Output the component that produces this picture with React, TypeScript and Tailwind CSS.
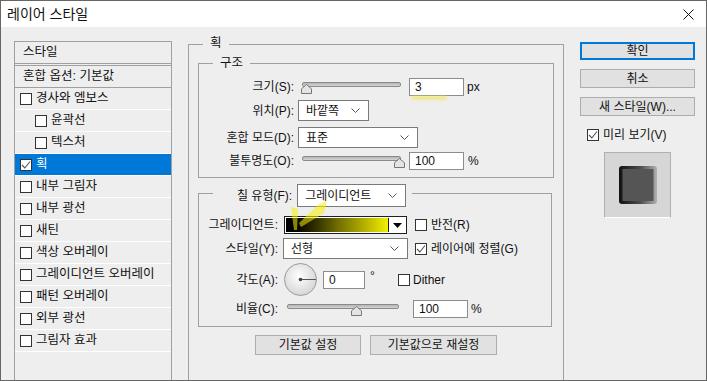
import React from 'react';

interface StyleItem {
    name: string;
    indent?: boolean;
    checked?: boolean;
    selected?: boolean;
}

const styleItems: StyleItem[] = [
    { name: '경사와 엠보스' },
    { name: '윤곽선', indent: true },
    { name: '텍스처', indent: true },
    { name: '획', checked: true, selected: true },
    { name: '내부 그림자' },
    { name: '내부 광선' },
    { name: '새틴' },
    { name: '색상 오버레이' },
    { name: '그레이디언트 오버레이' },
    { name: '패턴 오버레이' },
    { name: '외부 광선' },
    { name: '그림자 효과' },
];

const CheckBox = ({ checked = false }: { checked?: boolean }) => (
    <span className="w-[12px] h-[12px] shrink-0 border border-[#333333] bg-white flex items-center justify-center">
        {checked && (
            <svg width="10" height="10" viewBox="0 0 10 10">
                <polyline points="1,5 3.8,8 9,1.5" fill="none" stroke="#555555" strokeWidth="1.1" />
            </svg>
        )}
    </span>
);

const Chevron = () => (
    <svg width="9" height="5" viewBox="0 0 9 5" className="ml-auto mr-[8px] shrink-0">
        <polyline points="0.5,0.5 4.5,4.5 8.5,0.5" fill="none" stroke="#555555" strokeWidth="1" />
    </svg>
);

const Select = ({ text, className }: { text: string; className: string }) => (
    <div className={`border border-[#7a7a7a] bg-white flex items-center pl-[7px] ${className}`}>
        <span>{text}</span>
        <Chevron />
    </div>
);

const Slider = ({ width, value }: { width: number; value: number }) => {
    const x = Math.round(value * (width - 2));
    return (
        <div className="relative h-[18px] shrink-0" style={{ width }}>
            <div className="absolute left-0 right-0 top-[4px] h-[5px] rounded-[2px] border border-[#8a8a8a] bg-gradient-to-b from-[#b4b4b4] to-[#d6d6d6]" />
            <svg className="absolute top-[6px]" style={{ left: x - 4 }} width="11" height="10" viewBox="0 0 11 10">
                <polygon points="5.5,0.5 10.5,4.8 10.5,9.5 0.5,9.5 0.5,4.8" fill="#e4e4e4" stroke="#777777" />
            </svg>
        </div>
    );
};

const TextBox = ({ value, className }: { value: string; className: string }) => (
    <div className={`h-[18px] border border-[#8c8c8c] bg-white flex items-center pl-[5px] shrink-0 ${className}`}>
        {value}
    </div>
);

const Button = ({ label, className }: { label: string; className: string }) => (
    <button className={`bg-[#e1e1e1] flex items-center justify-center text-[12px] leading-none ${className}`}>
        {label}
    </button>
);

const App: React.FC = () => {
    return (
        <div className="w-[707px] h-[381px] bg-[#eeeeee] border border-[#666666] flex flex-col overflow-hidden text-[12px] text-[#111111] font-['Liberation_Sans','Noto_Sans_CJK_KR',sans-serif]">
            {/* title bar */}
            <div className="h-[26px] bg-white flex items-center pl-[6px] pr-[12px] shrink-0">
                <span className="text-[14px] leading-none">레이어 스타일</span>
                <svg width="11" height="11" viewBox="0 0 11 11" className="ml-auto">
                    <path d="M0.5 0.5 L10.5 10.5 M10.5 0.5 L0.5 10.5" stroke="#111111" strokeWidth="1" />
                </svg>
            </div>

            <div className="flex flex-1 min-h-0 pl-[13px] pt-[14px]">
                {/* style list */}
                <div className="w-[158px] shrink-0 border-t border-x border-[#a0a0a0] flex flex-col text-[12.5px]">
                    <div className="h-[22px] border-b border-[#a0a0a0] flex items-center pl-[8px]">스타일</div>
                    <div className="h-[1px]" />
                    <div className="h-[23px] border-y border-[#a0a0a0] flex items-center pl-[8px]">혼합 옵션: 기본값</div>
                    {styleItems.map(item => (
                        <div
                            key={item.name}
                            className={`h-[22px] border-b border-white flex items-center gap-[4px] ${item.indent ? 'pl-[20px]' : 'pl-[5px]'} ${item.selected ? 'bg-[#0078d7] text-white' : ''}`}
                        >
                            <CheckBox checked={item.checked} />
                            <span>{item.name}</span>
                        </div>
                    ))}
                </div>

                {/* stroke panel */}
                <div className="relative ml-[16px] mt-[3px] w-[376px] shrink-0 border-t border-x border-[#a0a0a0] pl-[9px] pr-[9px] pt-[18px]">
                    <span className="absolute left-[14px] top-[-10px] px-[7px] bg-[#eeeeee] leading-[16px] text-[12.5px]">획</span>

                    {/* structure */}
                    <div className="relative border border-[#a0a0a0] pt-[14px] pb-[7px]">
                        <span className="absolute left-[14px] top-[-9px] px-[7px] bg-[#eeeeee] leading-[16px] text-[12.5px]">구조</span>

                        <div className="h-[18px] flex items-center">
                            <span className="w-[95px] text-right shrink-0">크기(S):</span>
                            <div className="ml-[8px]"><Slider width={99} value={0.03} /></div>
                            <div className="relative ml-[8px]">
                                <TextBox value="3" className="w-[55px]" />
                                <div className="absolute left-[2px] top-[18px] w-[36px] h-[4px] rounded-full bg-[#f3ea70] blur-[1px] opacity-80" />
                            </div>
                            <span className="ml-[3px]">px</span>
                        </div>
                        <div className="h-[21px] mt-[4px] flex items-center">
                            <span className="w-[95px] text-right shrink-0">위치(P):</span>
                            <Select text="바깥쪽" className="ml-[4px] w-[71px] h-[21px]" />
                        </div>
                        <div className="h-[21px] mt-[6px] flex items-center">
                            <span className="w-[95px] text-right shrink-0">혼합 모드(D):</span>
                            <Select text="표준" className="ml-[4px] w-[120px] h-[21px]" />
                        </div>
                        <div className="h-[18px] mt-[4px] flex items-center">
                            <span className="w-[95px] text-right shrink-0">불투명도(O):</span>
                            <div className="ml-[8px]"><Slider width={99} value={0.99} /></div>
                            <TextBox value="100" className="ml-[8px] w-[55px]" />
                            <span className="ml-[4px]">%</span>
                        </div>
                    </div>

                    {/* fill type */}
                    <div className="relative mt-[15px] mr-[2px] border border-[#a0a0a0] pt-[22px] pb-[8px]">
                        <div className="absolute left-[14px] top-[-10px] pl-[24px] pr-[6px] bg-[#eeeeee] flex items-center">
                            <span>칠 유형(F):</span>
                            <Select text="그레이디언트" className="ml-[5px] w-[109px] h-[23px]" />
                        </div>

                        <div className="h-[18px] flex items-center">
                            <span className="w-[79px] text-right shrink-0">그레이디언트:</span>
                            <div className="relative ml-[6px] w-[123px] h-[18px] border border-[#1f1f1f] bg-white p-[1px] flex">
                                <div className="flex-1 bg-gradient-to-r from-[#000000] via-[#6e6c00] to-[#f4f000]" />
                                <div className="w-[1px] bg-[#1f1f1f]" />
                                <div className="w-[16px] flex items-center justify-center">
                                    <svg width="9" height="5" viewBox="0 0 9 5"><polygon points="0,0 9,0 4.5,5" fill="#000000" /></svg>
                                </div>
                                <svg className="absolute left-0 top-0 overflow-visible" width="1" height="1">
                                    <polygon points="6,-10 13,-8 12,13 9,13" fill="#f5f000" opacity="0.55" />
                                    <polygon points="34,-13 42,-16 39,-4 16,10 14,6" fill="#f5f000" opacity="0.55" />
                                </svg>
                            </div>
                            <div className="ml-[8px]"><CheckBox /></div>
                            <span className="ml-[4px]">반전(R)</span>
                        </div>
                        <div className="h-[21px] mt-[4px] flex items-center">
                            <span className="w-[79px] text-right shrink-0">스타일(Y):</span>
                            <Select text="선형" className="ml-[5px] w-[125px] h-[21px]" />
                            <div className="ml-[7px]"><CheckBox checked /></div>
                            <span className="ml-[4px]">레이어에 정렬(G)</span>
                        </div>
                        <div className="h-[33px] mt-[4px] flex items-center">
                            <span className="w-[79px] text-right shrink-0">각도(A):</span>
                            <svg className="ml-[6px] shrink-0" width="33" height="33" viewBox="0 0 33 33">
                                <defs>
                                    <radialGradient id="dial" cx="45%" cy="40%" r="60%">
                                        <stop offset="0%" stopColor="#ffffff" />
                                        <stop offset="100%" stopColor="#d6d6d6" />
                                    </radialGradient>
                                </defs>
                                <circle cx="16.5" cy="16.5" r="16" fill="url(#dial)" stroke="#9a9a9a" />
                                <line x1="16.5" y1="16.5" x2="32" y2="16.5" stroke="#555555" strokeWidth="1" />
                                <circle cx="16.5" cy="16.5" r="1.8" fill="#444444" />
                            </svg>
                            <TextBox value="0" className="ml-[6px] w-[42px]" />
                            <span className="ml-[5px] w-[10px] self-start mt-[7px] leading-[12px]">°</span>
                            <div className="ml-[18px]"><CheckBox /></div>
                            <span className="ml-[3px]">Dither</span>
                        </div>
                        <div className="h-[18px] mt-[4px] flex items-center">
                            <span className="w-[79px] text-right shrink-0">비율(C):</span>
                            <div className="ml-[9px]"><Slider width={112} value={0.62} /></div>
                            <TextBox value="100" className="ml-[14px] w-[55px]" />
                            <span className="ml-[3px]">%</span>
                        </div>
                    </div>

                    <div className="flex mt-[8px] pl-[57px]">
                        <Button label="기본값 설정" className="w-[106px] h-[20px] border border-[#adadad]" />
                        <Button label="기본값으로 재설정" className="ml-[9px] w-[127px] h-[20px] border border-[#adadad]" />
                    </div>
                </div>

                {/* buttons + preview */}
                <div className="ml-[16px] mt-[1px] w-[115px] shrink-0 flex flex-col">
                    <Button label="확인" className="h-[18px] border-2 border-[#0078d7]" />
                    <Button label="취소" className="mt-[9px] h-[19px] border border-[#adadad]" />
                    <Button label="새 스타일(W)..." className="mt-[9px] h-[19px] border border-[#adadad]" />
                    <div className="mt-[10px] pl-[7px] flex items-center">
                        <CheckBox checked />
                        <span className="ml-[4px]">미리 보기(V)</span>
                    </div>
                    <div className="mt-[8px] ml-[24px] w-[67px] h-[66px] bg-[#d6d6d6] border border-[#b0b0b0] border-b-white flex items-center justify-center">
                        <svg width="38" height="38" viewBox="0 0 38 38">
                            <defs>
                                <linearGradient id="edge" x1="0" y1="0" x2="1" y2="0">
                                    <stop offset="0%" stopColor="#111111" />
                                    <stop offset="55%" stopColor="#4a4a4a" />
                                    <stop offset="100%" stopColor="#b0b0b0" />
                                </linearGradient>
                            </defs>
                            <rect x="0" y="0" width="38" height="38" rx="3" fill="url(#edge)" />
                            <rect x="3.5" y="3" width="31" height="32" fill="#555555" />
                        </svg>
                    </div>
                </div>
            </div>
        </div>
    );
};

export default App;
